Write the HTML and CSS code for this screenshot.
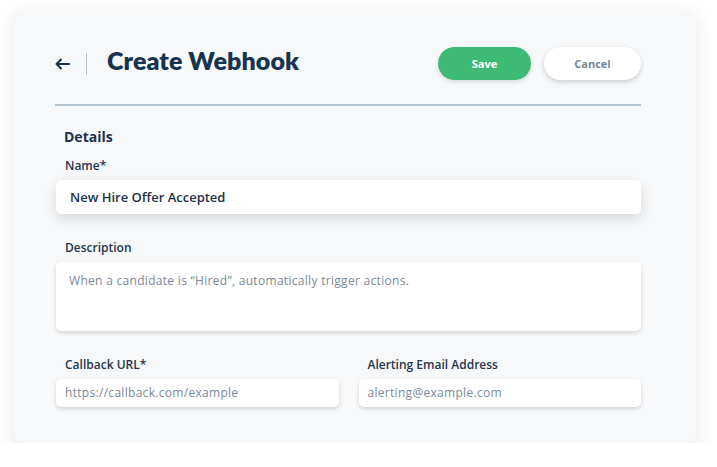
FILE: index.html
```html
<!DOCTYPE html>
<html lang="en">
  <head>
    <meta charset="utf-8" />
    <title>Create Webhook</title>
    <link rel="stylesheet" href="styles.css">
  </head>
  <body>
    <div class="card">
      <!-- Header -->
      <header class="top">
        <div class="title-group">
          <span class="back">
            <svg width="15" height="12" viewBox="0 0 15 12" fill="none" stroke="#163350" stroke-width="2" stroke-linecap="round" stroke-linejoin="round">
              <path d="M14 6H1.5M6 1.5L1.5 6L6 10.5"/>
            </svg>
          </span>
          <span class="divider"></span>
          <h1>Create Webhook</h1>
        </div>
        <div class="actions">
          <button type="button" class="btn save">Save</button>
          <button type="button" class="btn cancel">Cancel</button>
        </div>
      </header>

      <!-- Form -->
      <section class="details">
        <h2>Details</h2>
        <label class="label">Name*</label>
        <div class="field name">New Hire Offer Accepted</div>

        <label class="label">Description</label>
        <div class="field area placeholder">When a candidate is “Hired”, automatically trigger actions.</div>

        <div class="two-col">
          <div class="col">
            <label class="label">Callback URL*</label>
            <div class="field small placeholder">https://callback.com/example</div>
          </div>
          <div class="col">
            <label class="label">Alerting Email Address</label>
            <div class="field small placeholder">alerting@example.com</div>
          </div>
        </div>
      </section>
    </div>
  </body>
</html>
```

FILE: styles.css
```css
body {
  margin: 0;
  background: #fff;
  font-family: "Open Sans", "Noto Sans", sans-serif;
  color: #1d3148;
}

/* Main card */
.card {
  margin: 10px 0 0 14px;
  width: 682px;
  height: 433px;
  box-sizing: border-box;
  padding: 37px 55px 0 41px;
  background: #f7f8fa;
  border-radius: 10px;
  box-shadow: 0 6px 20px rgba(0,0,0,0.10);
}

/* Header row */
.top {
  display: flex;
  justify-content: space-between;
  align-items: center;
  height: 33px;
  padding-bottom: 24px;
  border-bottom: 2px solid #b5c5d1;
}
.title-group {
  display: flex;
  align-items: center;
}
.back {
  display: flex;
  width: 15px;
}
.divider {
  width: 1px;
  height: 22px;
  background: #b5c5d1;
  margin: 0 20px 0 16px;
}
.top h1 {
  margin: 0 0 8px;
  font-family: Lato, sans-serif;
  font-size: 25px;
  font-weight: 800;
  color: #163350;
  letter-spacing: 0.1px;
}
.actions {
  display: flex;
  gap: 13px;
}
.btn {
  height: 33px;
  border: none;
  border-radius: 17px;
  font-family: inherit;
  font-size: 11px;
  font-weight: 700;
  cursor: pointer;
}
.save {
  width: 93px;
  background: #3dba74;
  color: #fff;
  box-shadow: 0 2px 4px rgba(0,0,0,0.12);
}
.cancel {
  width: 97px;
  background: #fff;
  color: #778596;
  box-shadow: 0 2px 5px rgba(0,0,0,0.18);
}

/* Details form */
.details {
  padding: 21px 0 0 1px;
}
.details h2 {
  margin: 0 0 11px 8px;
  font-size: 14px;
  font-weight: 700;
  color: #1d3148;
}
.label {
  display: block;
  margin: 0 0 6px 9px;
  font-size: 12px;
  font-weight: 600;
  color: #24364c;
}
.field {
  box-sizing: border-box;
  background: #fff;
  border-radius: 5px;
  box-shadow: 0 2px 4px rgba(0,0,0,0.15);
  font-size: 12px;
}
.name {
  height: 34px;
  line-height: 34px;
  padding-left: 14px;
  margin-bottom: 25px;
  font-size: 13px;
  font-weight: 600;
  color: #1d3148;
  box-shadow: 0 5px 14px rgba(0,0,0,0.13);
}
.area {
  height: 69px;
  padding: 10px 13px;
  margin-bottom: 25px;
}
.placeholder {
  color: #7b8899;
  letter-spacing: 0.3px;
}
.two-col {
  display: flex;
  gap: 20px;
}
.col {
  flex: 1;
}
.small {
  height: 28px;
  line-height: 28px;
  padding-left: 9px;
}
```
